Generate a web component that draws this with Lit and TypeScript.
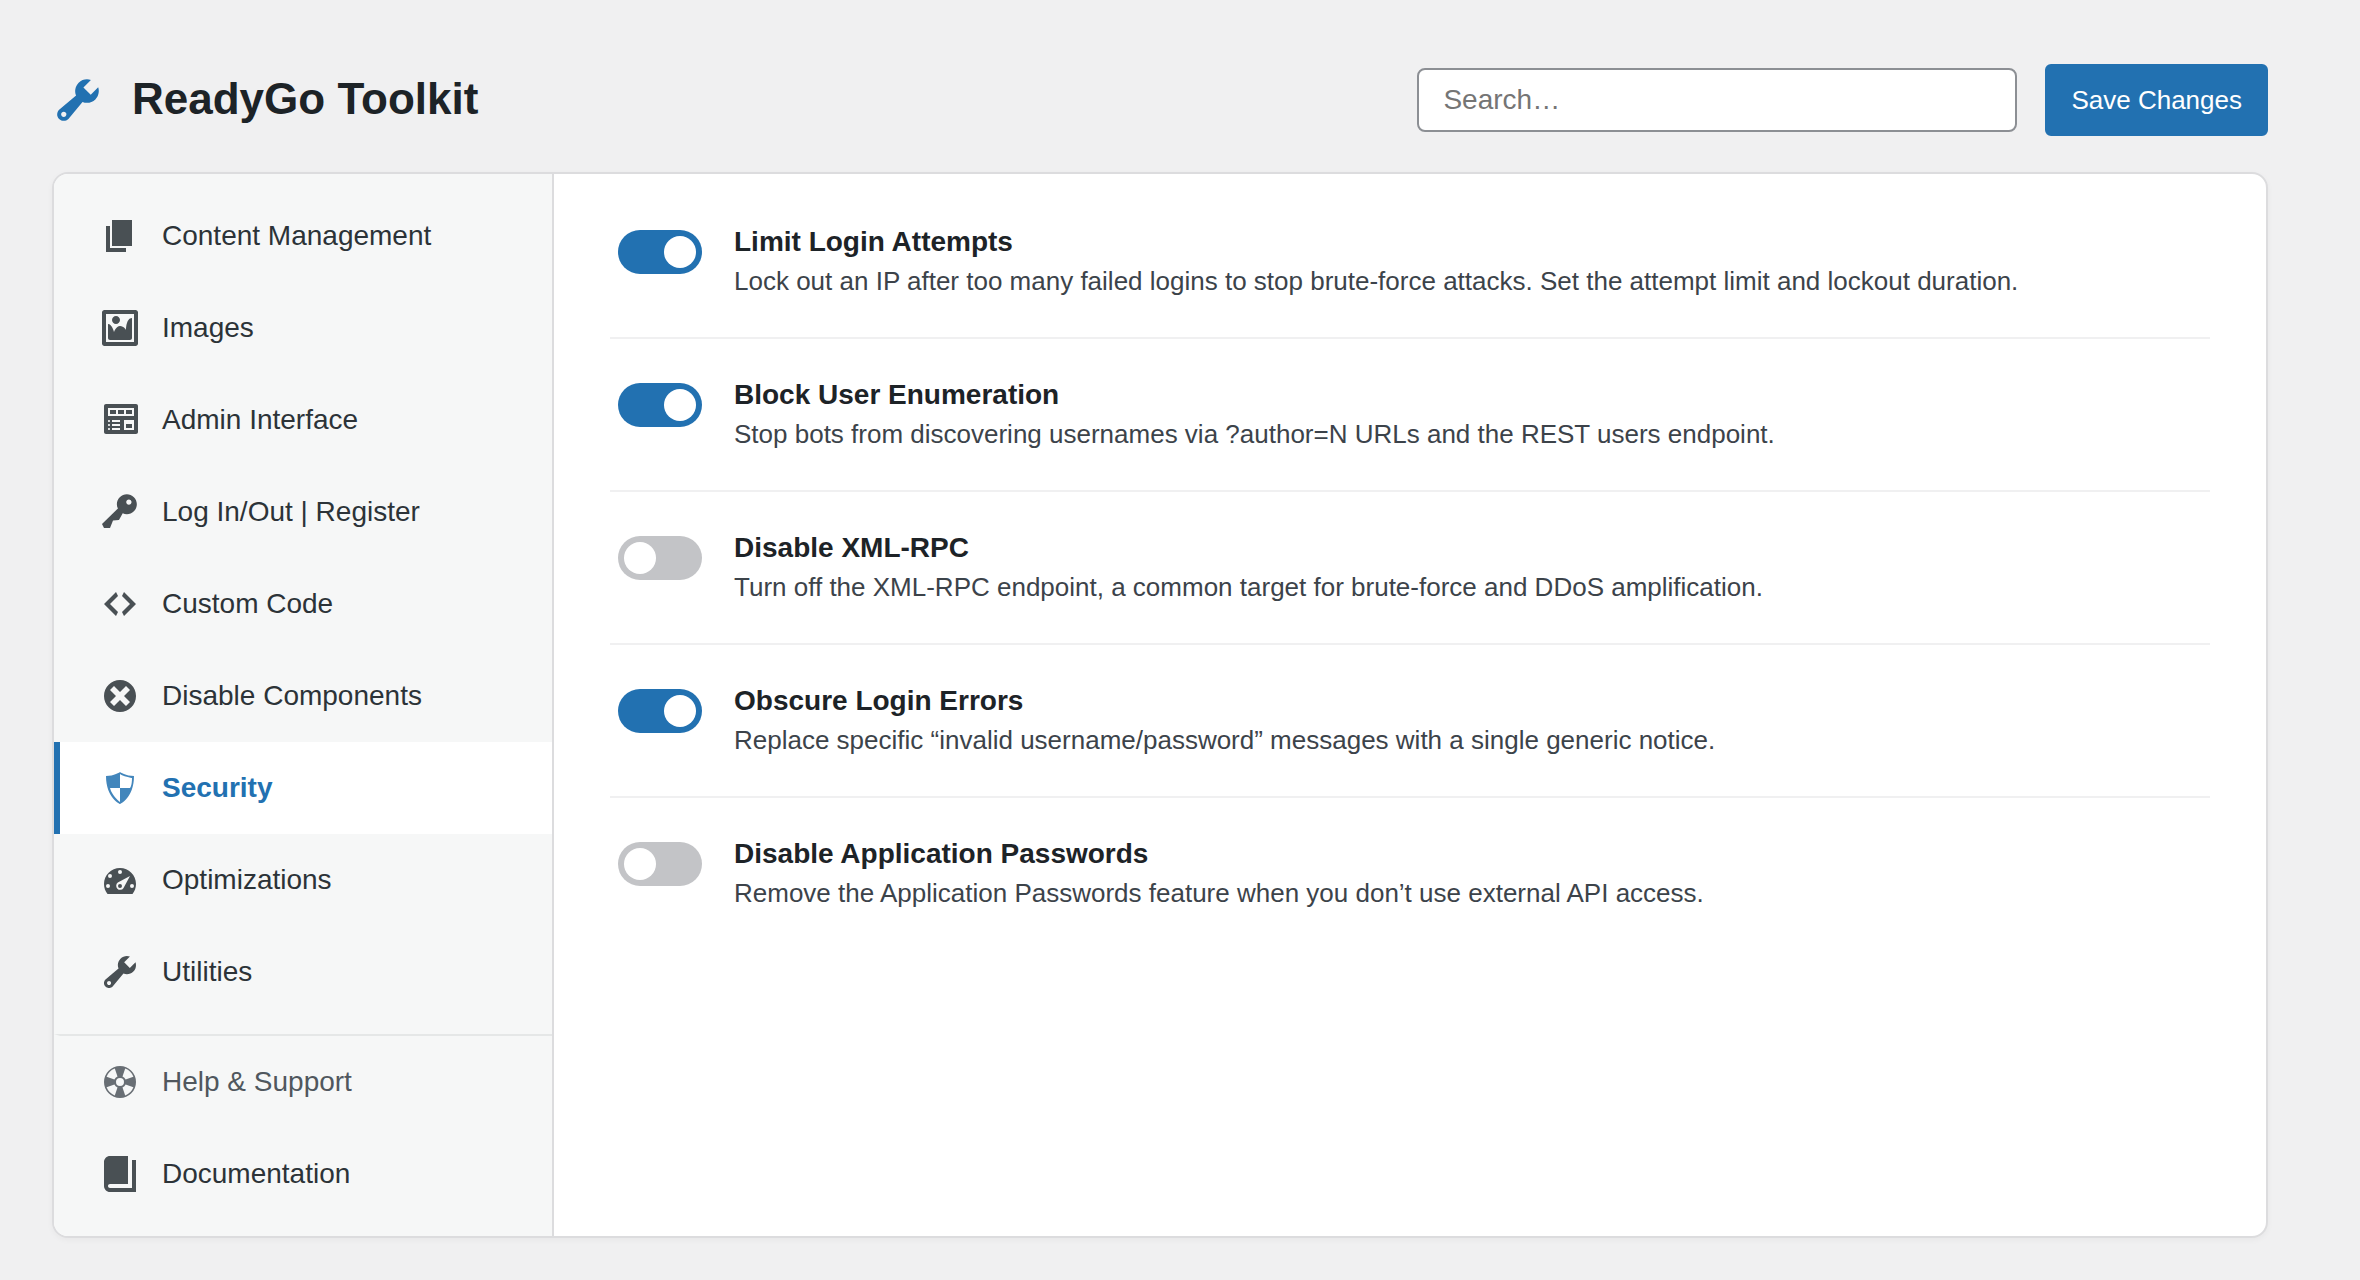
import { LitElement, html, css } from "lit";
import { customElement, state } from "lit/decorators.js";

const ICONS: Record<string, string> = {
  tools: "M16.68 9.77c-1.34 1.34-3.3 1.67-4.95.99l-5.41 6.52c-.99.99-2.59.99-3.58 0s-.99-2.59 0-3.57l6.52-5.42c-.68-1.65-.35-3.61.99-4.95 1.28-1.28 3.12-1.62 4.72-1.06l-2.89 2.89 2.82 2.82 2.86-2.87c.53 1.58.18 3.39-1.08 4.65zM3.81 16.21c.4.39 1.04.39 1.43 0 .4-.4.4-1.04 0-1.43-.39-.4-1.03-.4-1.43 0-.39.39-.39 1.03 0 1.43z",
  page: "M6 15V2h10v13H6zm-1 1h8v2H3V5h2v11z",
  image: "M2.25 1h15.5c.69 0 1.25.56 1.25 1.25v15.5c0 .69-.56 1.25-1.25 1.25H2.25C1.56 19 1 18.44 1 17.75V2.25C1 1.56 1.56 1 2.25 1zM17 17V3H3v14h14zM10 6c0-1.1-.9-2-2-2s-2 .9-2 2 .9 2 2 2 2-.9 2-2zm3 5s0-6 3-6v10c0 .55-.45 1-1 1H5c-.55 0-1-.45-1-1V8c2 0 3 4 3 4s1-3 3-3 3 2 3 2z",
  widgets: "M19 16V3c0-.55-.45-1-1-1H3c-.55 0-1 .45-1 1v13c0 .55.45 1 1 1h15c.55 0 1-.45 1-1zM4 4h13v4H4V4zm1 1v2h3V5H5zm4 0v2h3V5H9zm4 0v2h3V5h-3zm-8.5 5c.28 0 .5.22.5.5s-.22.5-.5.5-.5-.22-.5-.5.22-.5.5-.5zM6 10h4v1H6v-1zm6 0h5v5h-5v-5zm-7.5 2c.28 0 .5.22.5.5s-.22.5-.5.5-.5-.22-.5-.5.22-.5.5-.5zM6 12h4v1H6v-1zm7 0v2h3v-2h-3zm-8.5 2c.28 0 .5.22.5.5s-.22.5-.5.5-.5-.22-.5-.5.22-.5.5-.5zM6 14h4v1H6v-1z",
  key: "M16.95 2.58c1.96 1.95 1.96 5.12 0 7.07-1.51 1.51-3.75 1.84-5.59 1.01l-1.87 3.31-2.99.31L5 18H2l-1-2 7.95-7.69c-.92-1.87-.62-4.18.93-5.73 1.95-1.96 5.12-1.96 7.07 0zm-2.51 3.79c.74 0 1.33-.6 1.33-1.34 0-.73-.59-1.33-1.33-1.33-.73 0-1.33.6-1.33 1.33 0 .74.6 1.34 1.33 1.34z",
  code: "M9 6l-4 4 4 4-1 2-6-6 6-6zm2 8l4-4-4-4 1-2 6 6-6 6z",
  dismiss: "M10 2c4.42 0 8 3.58 8 8s-3.58 8-8 8-8-3.58-8-8 3.58-8 8-8zm5 11l-3-3 3-3-2-2-3 3-3-3-2 2 3 3-3 3 2 2 3-3 3 3z",
  shield: "M10 2s3 2 7 2c0 11-7 14-7 14S3 15 3 4c4 0 7-2 7-2zm0 8h5s1-1 1-5c0 0-5-1-6-2v7H5c1 4 5 7 5 7v-7z",
  gauge: "M3.76 17h12.48c1.1-1.37 1.76-3.11 1.76-5 0-4.42-3.58-8-8-8s-8 3.58-8 8c0 1.89.66 3.63 1.76 5zM10 5a1 1 0 1 0 0 2 1 1 0 0 0 0-2zM5 7a1 1 0 1 0 0 2 1 1 0 0 0 0-2zM4 12a1 1 0 1 0 0 2 1 1 0 0 0 0-2zM16 12a1 1 0 1 0 0 2 1 1 0 0 0 0-2zM15 8l-3.3 6.1A2 2 0 1 1 8.9 11.3zM10 12a1 1 0 1 0 0 2 1 1 0 0 0 0-2z",
  sos: "M10 2a8 8 0 1 0 0 16 8 8 0 0 0 0-16zM10 8a2 2 0 1 1 0 4 2 2 0 0 1 0-4zM7.4 3.3L8.75 7.2A3 3 0 0 0 7.2 8.75L3.3 7.4A7.2 7.2 0 0 1 7.4 3.3zM12.6 3.3A7.2 7.2 0 0 1 16.7 7.4L12.8 8.75A3 3 0 0 0 11.25 7.2zM3.3 12.6L7.2 11.25A3 3 0 0 0 8.75 12.8L7.4 16.7A7.2 7.2 0 0 1 3.3 12.6zM16.7 12.6A7.2 7.2 0 0 1 12.6 16.7L11.25 12.8A3 3 0 0 0 12.8 11.25z",
  book: "M16 3h2v16H5c-1.66 0-3-1.34-3-3V4c0-1.66 1.34-3 3-3h9v14H5c-.55 0-1 .45-1 1s.45 1 1 1h11V3z",
};

const icon = (name: string) => html`
  <svg class="icon" viewBox="0 0 20 20" aria-hidden="true">
    <path fill="currentColor" fill-rule="evenodd" d=${ICONS[name]}></path>
  </svg>
`;

const NAV = [
  { icon: "page", label: "Content Management" },
  { icon: "image", label: "Images" },
  { icon: "widgets", label: "Admin Interface" },
  { icon: "key", label: "Log In/Out | Register" },
  { icon: "code", label: "Custom Code" },
  { icon: "dismiss", label: "Disable Components" },
  { icon: "shield", label: "Security" },
  { icon: "gauge", label: "Optimizations" },
  { icon: "tools", label: "Utilities" },
  { icon: "sos", label: "Help & Support", kind: "help" },
  { icon: "book", label: "Documentation" },
];

@customElement("app-root")
export class AppRoot extends LitElement {
  @state() private active = "Security";

  @state() private settings = [
    { on: true, title: "Limit Login Attempts", text: "Lock out an IP after too many failed logins to stop brute-force attacks. Set the attempt limit and lockout duration." },
    { on: true, title: "Block User Enumeration", text: "Stop bots from discovering usernames via ?author=N URLs and the REST users endpoint." },
    { on: false, title: "Disable XML-RPC", text: "Turn off the XML-RPC endpoint, a common target for brute-force and DDoS amplification." },
    { on: true, title: "Obscure Login Errors", text: "Replace specific “invalid username/password” messages with a single generic notice." },
    { on: false, title: "Disable Application Passwords", text: "Remove the Application Passwords feature when you don’t use external API access." },
  ];

  static styles = css`
    :host {
      display: block;
      box-sizing: border-box;
      height: 1280px;
      padding: 64px 92px 42px 52px;
      background: #f0f0f1;
      color: #1d2327;
      font-family: "Liberation Sans", Arial, sans-serif;
      font-size: 26px;
    }
    * { box-sizing: border-box; }
    .icon { display: block; flex: none; width: 40px; height: 40px; }
    .header { display: flex; align-items: center; height: 72px; margin-bottom: 36px; }
    .logo { color: #2271b1; margin-right: 28px; }
    .logo .icon { width: 52px; height: 52px; }
    .name { margin: 0; padding-bottom: 2px; font-size: 44px; line-height: 52px; font-weight: 700; }
    .actions { display: flex; align-items: center; gap: 28px; margin-left: auto; }
    .search {
      width: 600px; height: 64px; padding: 0 24px; margin: 0;
      border: 2px solid #8c8f94; border-radius: 8px; background: #fff;
      font: 28px "Liberation Sans", Arial, sans-serif; color: #2c3338;
    }
    .search::placeholder { color: #757575; }
    .save {
      height: 72px; padding: 1px 24px 0; border: 2px solid #2271b1; border-radius: 6px;
      background: #2271b1; color: #fff; font: 26px "Liberation Sans", Arial, sans-serif;
    }
    .card {
      display: flex; height: 1066px; overflow: hidden;
      border: 2px solid #dcdcde; border-radius: 16px; background: #fff;
      box-shadow: 0 2px 6px rgba(0, 0, 0, 0.04);
    }
    .nav {
      flex: none; width: 500px; padding: 16px 0;
      background: #f6f7f7; border-right: 2px solid #dcdcde;
    }
    .item {
      display: flex; align-items: center; gap: 22px; height: 92px; padding-left: 40px;
      border-left: 6px solid transparent; color: #2c3338; font-size: 28px; cursor: pointer;
    }
    .item .icon { opacity: 0.85; }
    .item.active { background: #fff; border-left-color: #2271b1; color: #2271b1; font-weight: 700; }
    .item.help { height: 94px; margin-top: 16px; border-top: 2px solid #e5e7e7; color: #50575e; }
    .panel { flex: 1; padding: 12px 56px; }
    .row {
      display: flex; align-items: flex-start; gap: 32px; height: 153px;
      padding: 32px 8px 0; border-bottom: 2px solid #f0f0f1;
    }
    .row:last-child { border-bottom: 0; }
    .toggle {
      flex: none; display: flex; width: 84px; height: 44px; padding: 6px; margin-top: 12px;
      border-radius: 22px; background: #c3c4c7; cursor: pointer;
    }
    .toggle.on { justify-content: flex-end; background: #2271b1; }
    .knob { width: 32px; height: 32px; border-radius: 50%; background: #fff; }
    .title { font-size: 28px; line-height: 40px; font-weight: 700; margin-top: 4px; }
    .text { font-size: 26px; line-height: 39px; color: #3c434a; }
  `;

  private toggle(index: number) {
    this.settings = this.settings.map((s, i) => (i === index ? { ...s, on: !s.on } : s));
  }

  render() {
    return html`
      <header class="header">
        <span class="logo">${icon("tools")}</span>
        <h1 class="name">ReadyGo Toolkit</h1>
        <div class="actions">
          <input class="search" type="text" placeholder="Search…" />
          <button class="save">Save Changes</button>
        </div>
      </header>
      <div class="card">
        <nav class="nav">
          ${NAV.map((n) => html`
            <div
              class="item ${n.kind ?? ""} ${n.label === this.active ? "active" : ""}"
              @click=${() => (this.active = n.label)}
            >${icon(n.icon)}<span>${n.label}</span></div>
          `)}
        </nav>
        <main class="panel">
          ${this.settings.map((s, i) => html`
            <section class="row">
              <div class="toggle ${s.on ? "on" : ""}" role="switch" aria-checked=${s.on} @click=${() => this.toggle(i)}>
                <span class="knob"></span>
              </div>
              <div>
                <div class="title">${s.title}</div>
                <div class="text">${s.text}</div>
              </div>
            </section>
          `)}
        </main>
      </div>
    `;
  }
}
